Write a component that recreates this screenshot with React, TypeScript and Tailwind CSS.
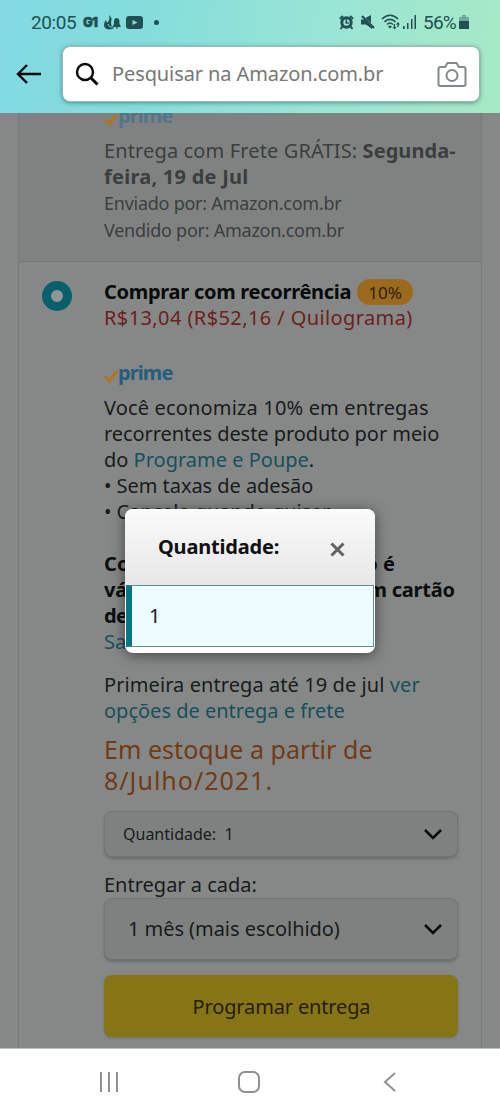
import type { ReactNode } from "react";

function Line({ className = "", children }: { className?: string; children: ReactNode }) {
  return <p className={`h-[26px] whitespace-nowrap text-[20px] leading-[26px] ${className}`}>{children}</p>;
}

function PrimeLogo({ className = "" }: { className?: string }) {
  return (
    <div className={`flex h-[26px] items-center ${className}`}>
      <svg width="15" height="16" viewBox="0 0 15 16" className="mt-[3px] text-[#b0761f]" fill="none">
        <path d="M1 9.500 5.500 14 13 4" stroke="currentColor" strokeWidth="3" />
      </svg>
      <span className="-ml-px text-[20px] font-bold leading-[26px] tracking-[-0.9px]">prime</span>
    </div>
  );
}

function StatusBar() {
  return (
    <div className="flex h-[44px] items-center justify-between pl-[31px] pr-[30px] text-[#215052]">
      <div className="flex items-center">
        <span className="w-[46px] whitespace-nowrap font-[Roboto] text-[19px] leading-none tracking-[-0.4px]">20:05</span>
        <span className="ml-[6px] w-[16px] font-[Inter] text-[13px] font-black leading-none tracking-[-0.8px] [-webkit-text-stroke:0.5px]">G1</span>
        <svg className="ml-[5px]" width="17" height="15" viewBox="0 0 17 15" fill="currentColor">
          <path d="M5 0c3 3 3 4 2 7 0 3 1 5 3 6-5 3-10 1-10-3 0-2 1-4 2-5l1 3c2-2 3-4 2-8Z" />
          <path d="M12.500 3c3 0 3 3 3 6l1.500 3H8.500L10 9c0-3 0-6 2.500-6ZM11.500 12.500h3L13 14Z" />
          <path d="M4 9c0 2 2 3 4 3" fill="none" stroke="#83dcdd" strokeWidth="1" />
        </svg>
        <svg className="ml-[5px]" width="17" height="13" viewBox="0 0 17 13">
          <rect width="17" height="13" rx="3" fill="currentColor" />
          <path d="m6.5 4 5 2.500-5 2.500Z" fill="#84ddd8" />
        </svg>
        <span className="ml-[11px] size-[5px] rounded-full bg-[#215052]" />
      </div>
      <div className="flex items-center">
        <svg width="15" height="15" viewBox="0 0 15 15" fill="none" stroke="currentColor">
          <circle cx="7.500" cy="7.500" r="4.700" strokeWidth="3" />
          <path d="M7.300 4.500V8h2.500" strokeWidth="1.500" />
          <path d="M.8 3.800 4 1M14.200 3.800 11 1M3.500 11.500l-2 2.500M11.500 11.500l2 2.500" strokeWidth="2" />
        </svg>
        <svg className="ml-[7px]" width="14" height="14" viewBox="0 0 14 14" fill="currentColor">
          <path d="M0 4.500h3.500L11 12v2L5 9.500H0ZM4.500 3 10 0v8Z" />
          <path d="m1 1 12 12" stroke="currentColor" strokeWidth="2.200" />
        </svg>
        <svg className="ml-[6px]" width="20" height="16" viewBox="0 0 20 16" fill="none" stroke="currentColor" strokeWidth="1.6">
          <path d="M1 5c5-5 11-5 16 0M3.500 8c3-3.500 8-3.500 11 0M6 10.500c2-2 4-2 6 0" />
          <path d="m9 11.500-2 1 2 2 2-2Z" fill="currentColor" stroke="none" />
          <path d="M13.500 10v4M17 9v4" strokeWidth="1.300" />
          <path d="m11.500 13 2 2.500 2-2.500ZM15 10.500l2-2.500 2 2.500Z" fill="currentColor" stroke="none" />
        </svg>
        <svg className="ml-[2px]" width="14" height="14" viewBox="0 0 14 14" fill="currentColor">
          <path d="M0 11h1.700v3H0ZM4 8h1.500v6H4ZM8 4h1.500v10H8ZM11.500 0H13v14h-1.500Z" />
        </svg>
        <span className="ml-[6px] w-[35px] whitespace-nowrap font-[Roboto] text-[19px] leading-none tracking-[-0.8px]">56%</span>
        <svg className="ml-[1px] mr-[1px]" width="10" height="14" viewBox="0 0 10 14">
          <path d="M3 0h4v2h3v5H0V2h3Z" fill="#6fa99a" />
          <path d="M0 6h10v8H0Z" fill="currentColor" />
        </svg>
      </div>
    </div>
  );
}

function Header() {
  return (
    <header className="h-[113px] shrink-0 bg-[linear-gradient(100deg,#82d9e4_0%,#84dddb_28%,#9ae5d5_65%,#a7e9c5_100%)]">
      <StatusBar />
      <div className="flex items-center pl-[16px]">
        <svg width="26" height="22" viewBox="0 0 26 22" fill="none" stroke="#050808" strokeWidth="2.4">
          <path d="M25 12H2M11 3 2 12l9 9" />
        </svg>
        <div className="ml-[20px] mt-[2px] flex h-[56px] w-[418px] items-center rounded-[8px] border border-[#a1b7b5] bg-white shadow-[0_1px_4px_rgba(0,70,70,0.5)]">
          <svg className="ml-[12px]" width="24" height="24" viewBox="0 0 24 24" fill="none" stroke="#080808">
            <circle cx="10" cy="10" r="8" strokeWidth="2.400" />
            <path d="m15.500 15.500 7 7" strokeWidth="3" />
          </svg>
          <span className="ml-[13px] w-[273px] whitespace-nowrap text-[20px] leading-none tracking-[-0.1px] text-[#777]">
            Pesquisar na Amazon.com.br
          </span>
          <svg className="ml-[52px] mt-[1px]" width="30" height="25" viewBox="0 0 30 25" fill="none" stroke="#82898c" strokeWidth="2">
            <path d="M3.500 5H8l2.500-4h9L22 5h4.500q2 0 2 2v15q0 2-2 2h-23q-2 0-2-2V7q0-2 2-2Z" />
            <circle cx="15" cy="13.500" r="5.500" />
          </svg>
        </div>
      </div>
    </header>
  );
}

function Select({ className, children }: { className: string; children: ReactNode }) {
  return (
    <div className={`flex w-[354px] items-center justify-between rounded-[8px] border border-[#727474] bg-[#7f8180] pr-[15px] shadow-[0_2px_3px_rgba(30,35,35,0.25)] ${className}`}>
      {children}
      <svg width="18" height="12" viewBox="0 0 18 12" fill="none" stroke="#080a0a" strokeWidth="2.500">
        <path d="m1 2 8 8 8-8" />
      </svg>
    </div>
  );
}

function QuantityDialog() {
  return (
    <div className="absolute left-[125px] top-[509px] h-[144px] w-[250px] overflow-hidden rounded-[8px] bg-white shadow-[0_2px_14px_rgba(0,0,0,0.5)]">
      <div className="flex h-[76px] items-center justify-between bg-linear-to-b from-[#fafafa] to-[#e7e7e7] pl-[33px] pr-[30px]">
        <h2 className="whitespace-nowrap text-[20px] font-bold tracking-[-0.2px] text-[#111]">Quantidade:</h2>
        <svg className="mt-[4px]" width="15" height="15" viewBox="0 0 15 15" stroke="#626262" strokeWidth="3">
          <path d="m1.500 1.500 12 12m0-12-12 12" />
        </svg>
      </div>
      <div className="ml-[1px] flex h-[62px] w-[248px] items-center border border-l-[6px] border-[#5c9096] border-l-[#057785] bg-[#ecfcff] pl-[17px] text-[20px] text-[#172020]">
        1
      </div>
    </div>
  );
}

function NavigationBar() {
  return (
    <nav className="flex h-[63px] shrink-0 items-center border-t border-[#bbb] bg-white pl-[99px] pt-[3px]">
      <svg width="20" height="20" viewBox="0 0 20 20" stroke="#909090" strokeWidth="2">
        <path d="M2 0v20M10 0v20M18 0v20" />
      </svg>
      <span className="ml-[119px] size-[22px] rounded-[7px] border-2 border-[#909090]" />
      <svg className="ml-[123px]" width="13" height="20" viewBox="0 0 13 20" fill="none" stroke="#909090" strokeWidth="2">
        <path d="M12 1 2 10l10 9" />
      </svg>
    </nav>
  );
}

export default function App() {
  return (
    <div className="relative flex h-[1111px] w-[500px] flex-col overflow-hidden bg-[#868887] font-['Noto_Sans','Open_Sans',sans-serif]">
      <Header />

      <main className="ml-[18px] h-[935px] w-[464px] shrink-0 overflow-hidden border-x border-[#797b7a]">
        <section className="h-[148px] overflow-hidden bg-[#808281] pl-[85px] text-[#3b3e3f]">
          <PrimeLogo className="-mt-[10px] text-[#52758a]" />
          <Line className="mt-[9px]">
            <span className="tracking-[0.13px]">Entrega com Frete GRÁTIS: </span>
            <b className="tracking-[0.05px]">Segunda-</b>
          </Line>
          <Line className="font-bold tracking-[0.25px]">feira, 19 de Jul</Line>
          <p className="whitespace-nowrap text-[18px] leading-[27px] tracking-[-0.25px]">Enviado por: Amazon.com.br</p>
          <p className="whitespace-nowrap text-[18px] leading-[27px] tracking-[-0.25px]">Vendido por: Amazon.com.br</p>
        </section>

        <section className="flex h-[787px] border-t border-[#747675] text-[#181b1c]">
          <div className="ml-[23px] mt-[19px] size-[30px] shrink-0 rounded-full border-[9px] border-[#08606a] bg-[#929596]" />
          <div className="ml-[32px] w-[354px] pt-[17px]">
            <div className="flex h-[26px] items-center">
              <Line className="w-[253px] font-bold tracking-[-0.28px] text-[#080a0b]">Comprar com recorrência</Line>
              <span className="flex h-[26px] w-[56px] items-center justify-center rounded-full bg-[#9c6a1c] pt-px text-[17px] text-[#2b2115]">10%</span>
            </div>
            <Line className="tracking-[0.4px] text-[#6d211c]">R$13,04 (R$52,16 / Quilograma)</Line>
            <PrimeLogo className="mt-[29px] text-[#235e7e]" />

            <div className="mt-[9px]">
              <Line className="tracking-[0.16px]">Você economiza 10% em entregas</Line>
              <Line className="tracking-[-0.06px]">recorrentes deste produto por meio</Line>
              <Line>do <a className="text-[#174f5c]">Programe e Poupe</a>.</Line>
              <Line className="tracking-[-0.05px]">• Sem taxas de adesão</Line>
              <Line className="tracking-[-0.08px]">• Cancele quando quiser</Line>
            </div>

            <div className="mt-[26px] font-bold text-[#0b0d0e]">
              <Line className="tracking-[0.05px]">Compra com recorrência só é</Line>
              <Line className="tracking-[-0.22px]">válido para pagamentos com cartão</Line>
              <Line className="tracking-[-0.6px]">de crédito.</Line>
              <Line className="font-normal text-[#174f5c]">Saiba mais</Line>
            </div>

            <div className="mt-[17px]">
              <Line className="tracking-[0.08px]">Primeira entrega até 19 de jul <a className="text-[#174f5c]">ver</a></Line>
              <Line className="text-[#174f5c]">opções de entrega e frete</Line>
            </div>

            <div className="mt-[10px] whitespace-nowrap text-[25px] leading-[31px] text-[#703b15]">
              <p className="tracking-[0.05px]">Em estoque a partir de</p>
              <p className="tracking-[1px]">8/Julho/2021.</p>
            </div>

            <Select className="mt-[15px] h-[46px] pl-[18px]">
              <span className="whitespace-pre text-[16px]">Quantidade:  1</span>
            </Select>
            <Line className="mt-[15px]">Entregar a cada:</Line>
            <Select className="h-[62px] pl-[23px]">
              <span className="whitespace-nowrap text-[20px] tracking-[-0.05px]">1 mês (mais escolhido)</span>
            </Select>
            <button className="mt-[15px] h-[62px] w-[354px] rounded-[8px] bg-[#867514] pl-px pt-px text-[20px] tracking-[-0.15px] text-[#251c0c] shadow-[0_1px_2px_rgba(50,50,40,0.3)]">
              Programar entrega
            </button>
          </div>
        </section>
      </main>

      <NavigationBar />
      <QuantityDialog />
    </div>
  );
}
